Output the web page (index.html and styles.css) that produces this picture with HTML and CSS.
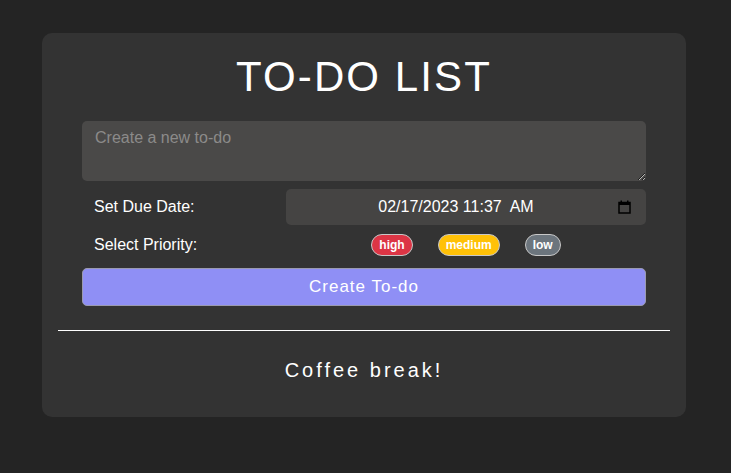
FILE: index.html
```html
<!DOCTYPE html>
<html>
<head>
<meta charset="utf-8">
<link rel="stylesheet" href="styles.css">
</head>
<body>
<main class="card">
  <h1 class="title">TO-DO LIST</h1>
  <form class="form">
    <textarea class="todo-input" placeholder="Create a new to-do"></textarea>
    <div class="row">
      <span class="label">Set Due Date:</span>
      <div class="date-input" role="textbox" aria-label="Due date">
        <span class="date-value">02/17/2023 11:37&#8194;AM</span>
        <svg class="cal-icon" width="13" height="14" viewBox="0 0 13 14" aria-hidden="true">
          <rect x="1" y="2.5" width="11" height="10.5" fill="none" stroke="#000" stroke-width="1.5"/>
          <rect x="1" y="2.5" width="11" height="2.5" fill="#000"/>
          <rect x="2.5" y="0.5" width="1.5" height="2.5" fill="#000"/>
          <rect x="9" y="0.5" width="1.5" height="2.5" fill="#000"/>
        </svg>
      </div>
    </div>
    <div class="row">
      <span class="label">Select Priority:</span>
      <div class="badges">
        <span class="badge badge-high">high</span>
        <span class="badge badge-medium">medium</span>
        <span class="badge badge-low">low</span>
      </div>
    </div>
    <button type="button" class="create-btn">Create To-do</button>
  </form>
  <hr class="divider">
  <p class="empty">Coffee break!</p>
</main>
</body>
</html>
```

FILE: styles.css
```css
html, body {
  margin: 0;
  padding: 0;
}
body {
  background: #242424;
  font-family: "Liberation Sans", Arial, sans-serif;
  color: #fff;
  padding: 33px 45px 0 42px;
}
.card {
  width: 644px;
  box-sizing: border-box;
  background: #333333;
  border-radius: 10px;
  padding: 16px 16px 35px;
}
.title {
  margin: 0;
  text-align: center;
  font-weight: normal;
  font-size: 42px;
  letter-spacing: 2.1px;
  line-height: 56px;
  padding-bottom: 16px;
}
.form {
  margin: 0 24px;
  display: flex;
  flex-direction: column;
}
.todo-input {
  box-sizing: border-box;
  height: 60px;
  width: 100%;
  background: #4a4948;
  border: none;
  border-radius: 5px;
  padding: 8px 13px;
  color: #fff;
  font-family: "Liberation Sans", Arial, sans-serif;
  font-size: 16px;
  outline: none;
  margin: 0;
  resize: vertical;
}
.todo-input::placeholder {
  color: #8c8b8a;
}
.row {
  display: grid;
  grid-template-columns: 204px 1fr;
  align-items: center;
}
.row:first-of-type {
  margin-top: 8px;
}
.label {
  padding-left: 12px;
  font-size: 16px;
}
.date-input {
  box-sizing: border-box;
  height: 36px;
  width: 100%;
  background: #454443;
  border-radius: 5px;
  color: #fff;
  font-size: 16px;
  display: flex;
  align-items: center;
  padding: 0 15px 0 12px;
}
.date-value {
  flex: 1;
  text-align: center;
  padding-right: 4px;
  white-space: pre;
}
.cal-icon {
  display: block;
  flex: none;
}
.badges {
  display: flex;
  justify-content: center;
  gap: 25px;
  height: 40px;
  align-items: center;
}
.badge {
  display: inline-block;
  font-size: 12px;
  font-weight: bold;
  color: #fff;
  border: 1px solid #c8c8c8;
  border-radius: 11px;
  padding: 3px 7px;
  line-height: 14px;
}
.badge-high { background: #dc3545; }
.badge-medium { background: #ffc107; }
.badge-low { background: #6c757d; }
.create-btn {
  margin-top: 3px;
  height: 38px;
  background: #8f8ff5;
  border: 1px solid #9a9ab0;
  border-radius: 5px;
  color: #fff;
  font-family: "Liberation Sans", Arial, sans-serif;
  font-size: 17px;
  letter-spacing: 1px;
}
.divider {
  border: none;
  border-top: 1px solid #fff;
  margin: 24px 0 0;
  height: 0;
}
.empty {
  margin: 27px 0 0;
  text-align: center;
  font-size: 20px;
  letter-spacing: 3px;
  line-height: 24px;
}
```
